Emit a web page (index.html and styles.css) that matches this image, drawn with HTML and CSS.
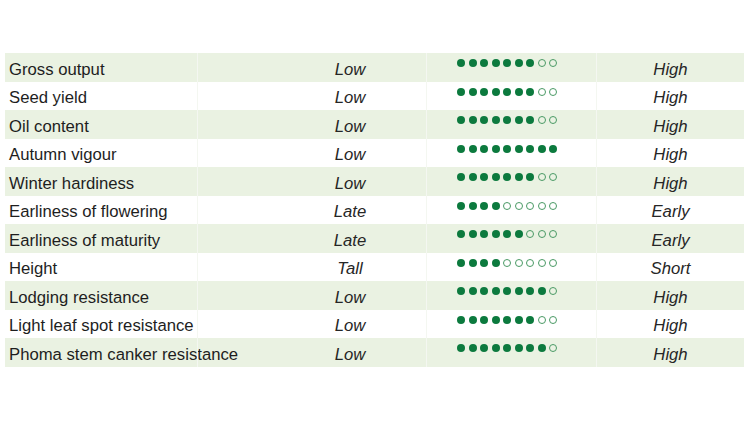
FILE: index.html
```html
<!DOCTYPE html>
<html>
<head>
<meta charset="utf-8">
<link rel="stylesheet" href="styles.css">
</head>
<body>
<div class="table">
  <div class="row shade"><div class="c name">Gross output</div><div class="c lo">Low</div><div class="c dots"><i class="f"></i><i class="f"></i><i class="f"></i><i class="f"></i><i class="f"></i><i class="f"></i><i class="f"></i><i class="o"></i><i class="o"></i></div><div class="c hi">High</div></div>
  <div class="row"><div class="c name">Seed yield</div><div class="c lo">Low</div><div class="c dots"><i class="f"></i><i class="f"></i><i class="f"></i><i class="f"></i><i class="f"></i><i class="f"></i><i class="f"></i><i class="o"></i><i class="o"></i></div><div class="c hi">High</div></div>
  <div class="row shade"><div class="c name">Oil content</div><div class="c lo">Low</div><div class="c dots"><i class="f"></i><i class="f"></i><i class="f"></i><i class="f"></i><i class="f"></i><i class="f"></i><i class="f"></i><i class="o"></i><i class="o"></i></div><div class="c hi">High</div></div>
  <div class="row"><div class="c name">Autumn vigour</div><div class="c lo">Low</div><div class="c dots"><i class="f"></i><i class="f"></i><i class="f"></i><i class="f"></i><i class="f"></i><i class="f"></i><i class="f"></i><i class="f"></i><i class="f"></i></div><div class="c hi">High</div></div>
  <div class="row shade"><div class="c name">Winter hardiness</div><div class="c lo">Low</div><div class="c dots"><i class="f"></i><i class="f"></i><i class="f"></i><i class="f"></i><i class="f"></i><i class="f"></i><i class="f"></i><i class="o"></i><i class="o"></i></div><div class="c hi">High</div></div>
  <div class="row"><div class="c name">Earliness of flowering</div><div class="c lo">Late</div><div class="c dots"><i class="f"></i><i class="f"></i><i class="f"></i><i class="f"></i><i class="o"></i><i class="o"></i><i class="o"></i><i class="o"></i><i class="o"></i></div><div class="c hi">Early</div></div>
  <div class="row shade"><div class="c name">Earliness of maturity</div><div class="c lo">Late</div><div class="c dots"><i class="f"></i><i class="f"></i><i class="f"></i><i class="f"></i><i class="f"></i><i class="f"></i><i class="o"></i><i class="o"></i><i class="o"></i></div><div class="c hi">Early</div></div>
  <div class="row"><div class="c name">Height</div><div class="c lo">Tall</div><div class="c dots"><i class="f"></i><i class="f"></i><i class="f"></i><i class="f"></i><i class="o"></i><i class="o"></i><i class="o"></i><i class="o"></i><i class="o"></i></div><div class="c hi">Short</div></div>
  <div class="row shade"><div class="c name">Lodging resistance</div><div class="c lo">Low</div><div class="c dots"><i class="f"></i><i class="f"></i><i class="f"></i><i class="f"></i><i class="f"></i><i class="f"></i><i class="f"></i><i class="f"></i><i class="o"></i></div><div class="c hi">High</div></div>
  <div class="row"><div class="c name">Light leaf spot resistance</div><div class="c lo">Low</div><div class="c dots"><i class="f"></i><i class="f"></i><i class="f"></i><i class="f"></i><i class="f"></i><i class="f"></i><i class="f"></i><i class="o"></i><i class="o"></i></div><div class="c hi">High</div></div>
  <div class="row shade"><div class="c name">Phoma stem canker resistance</div><div class="c lo">Low</div><div class="c dots"><i class="f"></i><i class="f"></i><i class="f"></i><i class="f"></i><i class="f"></i><i class="f"></i><i class="f"></i><i class="f"></i><i class="o"></i></div><div class="c hi">High</div></div>
</div>
</body>
</html>
```
FILE: styles.css
```css
html, body {
  margin: 0;
  padding: 0;
  background: #ffffff;
}
body {
  font-family: "Liberation Sans", Arial, sans-serif;
  font-size: 16.7px;
  color: #1e1e1e;
}
.table {
  margin: 53px 0 0 5px;
  width: 739px;
}
.row {
  display: grid;
  grid-template-columns: 192px 229px 170px 148px;
  height: 28.5px;
}
.row.shade {
  background: #eaf2e2;
}
.c {
  box-sizing: border-box;
  height: 28.5px;
  line-height: 24px;
  padding-top: 4.5px;
  white-space: nowrap;
}
.c + .c {
  border-left: 1px solid #f4f7f1;
}
.name {
  padding-left: 4px;
}
.lo {
  font-style: italic;
  color: #262626;
  text-align: center;
  padding-left: 76px;
}
.hi {
  font-style: italic;
  color: #262626;
  text-align: center;
}
.dots {
  display: flex;
  align-items: flex-start;
  gap: 3.5px;
  padding-top: 6.3px;
  padding-left: 30px;
}
.dots i {
  display: block;
  box-sizing: border-box;
  width: 8px;
  height: 8px;
  border-radius: 50%;
}
.dots i.f {
  background: #0c7a3e;
}
.dots i.o {
  border: 1.5px solid #4a9a65;
  background: transparent;
}
```
